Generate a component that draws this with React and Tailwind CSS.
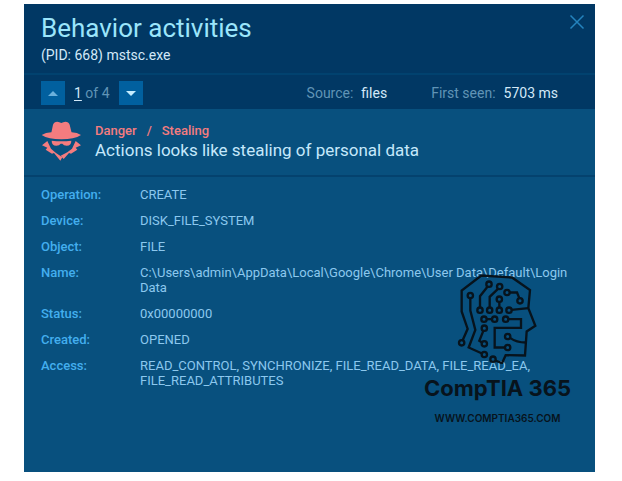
import { useState } from "react";

const details = [
  { label: "Operation:", value: "CREATE" },
  { label: "Device:", value: "DISK_FILE_SYSTEM" },
  { label: "Object:", value: "FILE" },
  {
    label: "Name:",
    value:
      "C:\\Users\\admin\\AppData\\Local\\Google\\Chrome\\User Data\\Default\\Login Data",
  },
  { label: "Status:", value: "0x00000000" },
  { label: "Created:", value: "OPENED" },
  {
    label: "Access:",
    value:
      "READ_CONTROL, SYNCHRONIZE, FILE_READ_DATA, FILE_READ_EA, FILE_READ_ATTRIBUTES",
  },
];

const TOTAL = 4;

// Small circles at the ends of the circuit traces
const nodes = [
  [147, 61],
  [179, 68],
  [201, 86],
  [240, 111],
  [91, 95],
  [178, 106],
  [120, 139],
  [149, 139],
  [178, 139],
  [207, 139],
  [132, 166],
  [164, 166],
  [197, 166],
  [133, 193],
  [203, 218],
  [133, 240],
  [203, 251],
  [65, 237],
  [133, 272],
  [159, 286],
];

const SpyIcon = () => (
  <svg viewBox="60 34 120 120" className="size-10 shrink-0 fill-[#f47c7f]" aria-hidden="true">
    <path d="M90 74 L96 45 Q99 36 109 36 Q115 37 121 40 Q127 37 133 36 Q143 36 146 45 L153 74 Z" />
    <path d="M62 76 Q74 69 91 68 Q121 74 152 68 Q169 69 180 76 Q160 89 121 89 Q82 89 62 76 Z" />
    <path d="M92 93 Q121 96 151 93 Q151 108 137 108 Q128 108 124 102 L119 102 Q115 108 106 108 Q92 108 92 93 Z" />
    <path d="M79 94 L63 107 L79 114 L74 120 L93 132 L99 130 L118 153 L124 143 L104 129 L90 117 Z" />
    <path d="M164 94 L180 107 L164 114 L169 120 L150 132 L144 130 L128 148 L119 138 L139 128 L153 117 Z" />
  </svg>
);

const BrandIcon = () => (
  <svg
    viewBox="51 25 240 275"
    className="h-[92px] w-20 fill-none stroke-[#07131c] stroke-7"
    aria-hidden="true"
  >
    <path d="M68 229 L83 195 L65 143 L65 80 L124 35 L216 41 L270 79 L265 133 L286 186 L260 203 L255 275 L197 274 L186 298 L166 290" />
    <path d="M91 103 L91 140 L106 198 L86 251 L126 269" />
    <path d="M143 68 L120 97 L120 131" />
    <path d="M174 75 L149 99 L149 131" />
    <path d="M209 86 L231 86 L238 103" />
    <path d="M178 114 L178 131" />
    <path d="M215 138 L265 133" />
    <path d="M140 166 L156 166" />
    <path d="M205 166 L243 166 L243 192 L164 192 L164 251 L195 251" />
    <path d="M130 201 L118 231 L126 236" />
    <path d="M210 222 Q230 236 257 236" />
    {nodes.map(([cx, cy]) => (
      <circle key={`${cx}-${cy}`} cx={cx} cy={cy} r="8" />
    ))}
  </svg>
);

const App = () => {
  const [current, setCurrent] = useState(1);
  const [open, setOpen] = useState(true);

  if (!open) return <div className="min-h-screen bg-white" />;

  return (
    <div className="min-h-screen bg-white pt-1 pr-[27px] pb-[9px] pl-6 font-[Roboto,sans-serif]">
      <main className="relative min-h-[468px] bg-[#08507e]">
        <header className="flex items-start justify-between border-b-2 border-[#01426f] bg-[#013864] pt-2 pr-2.5 pb-2.5 pl-[17px]">
          <div>
            <h1 className="text-[26px] leading-8 text-[#9be5fb]">
              Behavior activities
            </h1>
            <p className="pt-[3px] text-sm leading-4 text-[#d3e9f8]">
              (PID: 668) mstsc.exe
            </p>
          </div>
          <button
            type="button"
            aria-label="Close"
            className="mt-0.5"
            onClick={() => setOpen(false)}
          >
            <svg viewBox="0 0 16 16" className="size-4 fill-none stroke-[#2483bd] stroke-[1.5]">
              <path d="M1.5 1.5 L14.5 14.5 M14.5 1.5 L1.5 14.5" />
            </svg>
          </button>
        </header>

        <div className="flex items-center justify-between bg-[#013864] pt-1.5 pr-[37px] pb-1 pl-[17px] text-sm leading-6 text-[#6094b6]">
          <div className="flex items-center">
            <button
              type="button"
              aria-label="Previous"
              className="flex size-6 items-center justify-center bg-[#01609f]"
              onClick={() => setCurrent(Math.max(1, current - 1))}
            >
              <svg viewBox="0 0 10 5" className="h-[5px] w-2.5 fill-[#6bb0dc]">
                <path d="M0 5 L5 0 L10 5 Z" />
              </svg>
            </button>
            <span className="px-[9px]">
              <span className="text-[#d3e9f8] underline underline-offset-2">{current}</span>{" "}
              of {TOTAL}
            </span>
            <button
              type="button"
              aria-label="Next"
              className="flex size-6 items-center justify-center bg-[#01609f]"
              onClick={() => setCurrent(Math.min(TOTAL, current + 1))}
            >
              <svg viewBox="0 0 10 5" className="h-[5px] w-2.5 fill-[#c5edff]">
                <path d="M0 0 L10 0 L5 5 Z" />
              </svg>
            </button>
          </div>
          <div className="flex gap-11">
            <p className="flex gap-2">
              Source: <span className="text-[#d3e9f8]">files</span>
            </p>
            <p className="flex gap-2">
              First seen: <span className="text-[#d3e9f8]">5703 ms</span>
            </p>
          </div>
        </div>

        <section className="flex items-start gap-3.5 border-b-2 border-[#04426e] px-[17px] pt-3 pb-3.5">
          <SpyIcon />
          <div>
            <p className="flex gap-2.5 pt-0.5 text-[13px] leading-4 font-medium text-[#f47c7f]">
              <span>Danger</span>
              <span>/</span>
              <span>Stealing</span>
            </p>
            <h2 className="text-[17px] leading-[22px] text-[#c5e8fb]">
              Actions looks like stealing of personal data
            </h2>
          </div>
        </section>

        <dl className="flex flex-col gap-[11px] pt-2.5 pr-5 pb-6 pl-[17px] text-[13px] leading-[15px]">
          {details.map((item) => (
            <div key={item.label} className="flex">
              <dt className="w-[99px] shrink-0 font-medium text-[#43aeee]">
                {item.label}
              </dt>
              <dd className="text-[#8cc8ee]">{item.value}</dd>
            </div>
          ))}
        </dl>

        {/* Watermark over the details */}
        <div className="pointer-events-none absolute right-6 bottom-12 flex flex-col items-center font-[Inter,sans-serif] text-[#07131c]">
          <BrandIcon />
          <p className="pt-1.5 text-[22px] leading-9 font-bold">CompTIA 365</p>
          <p className="pt-1.5 text-[10px] leading-3 font-semibold">WWW.COMPTIA365.COM</p>
        </div>
      </main>
    </div>
  );
};

export default App;
